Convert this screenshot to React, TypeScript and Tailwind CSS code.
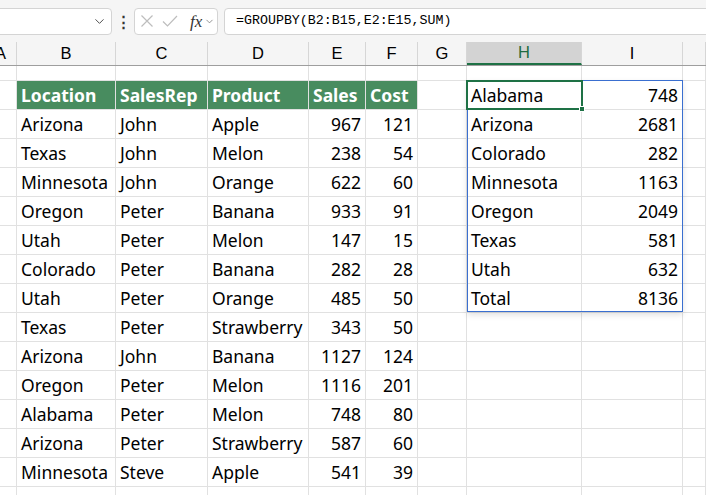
import { ChevronDown } from "lucide-react";

const cols = [
  { l: "A", w: 17 },
  { l: "B", w: 99 },
  { l: "C", w: 92 },
  { l: "D", w: 101 },
  { l: "E", w: 57 },
  { l: "F", w: 52 },
  { l: "G", w: 49 },
  { l: "H", w: 115 },
  { l: "I", w: 101 },
  { l: "J", w: 23 },
];

const sales: [string, string, string, number, number][] = [
  ["Arizona", "John", "Apple", 967, 121],
  ["Texas", "John", "Melon", 238, 54],
  ["Minnesota", "John", "Orange", 622, 60],
  ["Oregon", "Peter", "Banana", 933, 91],
  ["Utah", "Peter", "Melon", 147, 15],
  ["Colorado", "Peter", "Banana", 282, 28],
  ["Utah", "Peter", "Orange", 485, 50],
  ["Texas", "Peter", "Strawberry", 343, 50],
  ["Arizona", "John", "Banana", 1127, 124],
  ["Oregon", "Peter", "Melon", 1116, 201],
  ["Alabama", "Peter", "Melon", 748, 80],
  ["Arizona", "Peter", "Strawberry", 587, 60],
  ["Minnesota", "Steve", "Apple", 541, 39],
];

const groups: [string, number][] = [
  ["Alabama", 748],
  ["Arizona", 2681],
  ["Colorado", 282],
  ["Minnesota", 1163],
  ["Oregon", 2049],
  ["Texas", 581],
  ["Utah", 632],
  ["Total", 8136],
];

type Cell = { v?: string | number; head?: boolean };

function Row({ cells, h }: { cells: Cell[]; h: string }) {
  return (
    <div className={`flex ${h}`}>
      {cols.map((c, i) => {
        const cell = cells[i] || {};
        const num = typeof cell.v === "number";
        return (
          <div
            key={c.l}
            style={{ width: c.w }}
            className={`shrink-0 border-r border-b border-[#e1e1e1] flex items-center overflow-hidden whitespace-nowrap px-[4px] ${
              cell.head ? "bg-[#488c5f] text-white font-bold" : "text-black"
            } ${num ? "justify-end" : "justify-start"}`}
          >
            {cell.v}
          </div>
        );
      })}
    </div>
  );
}

export default function App() {
  const rows: Cell[][] = [];
  rows.push([
    {},
    { v: "Location", head: true },
    { v: "SalesRep", head: true },
    { v: "Product", head: true },
    { v: "Sales", head: true },
    { v: "Cost", head: true },
    {},
    { v: groups[0][0] },
    { v: groups[0][1] },
  ]);
  sales.forEach((s, i) => {
    const g = groups[i + 1];
    rows.push([
      {},
      { v: s[0] },
      { v: s[1] },
      { v: s[2] },
      { v: s[3] },
      { v: s[4] },
      {},
      g ? { v: g[0] } : {},
      g ? { v: g[1] } : {},
    ]);
  });

  return (
    <div className="w-[706px] h-[495px] overflow-hidden bg-white font-['Noto_Sans',sans-serif] text-[17.5px] relative">
      {/* formula bar */}
      <div className="h-[42px] bg-[#f5f5f5] flex items-center">
        <div className="h-[27px] w-[122px] shrink-0 -ml-[10px] bg-white border border-[#d4d4d4] rounded-[4px] flex items-center justify-end pr-[4px]">
          <ChevronDown size={15} strokeWidth={1.5} className="text-[#444]" />
        </div>
        <div className="w-[22px] shrink-0 flex justify-center text-[#333] font-bold text-[15px] leading-none">⋮</div>
        <div className="h-[27px] w-[84px] shrink-0 bg-white border border-[#d4d4d4] rounded-[4px] flex items-center pl-[5px]">
          <svg width="14" height="14" viewBox="0 0 14 14" className="text-[#bdbdbd]">
            <path d="M1.5 1.5 L12.5 12.5 M12.5 1.5 L1.5 12.5" stroke="currentColor" strokeWidth="1.2" fill="none" />
          </svg>
          <svg width="16" height="14" viewBox="0 0 16 14" className="text-[#bdbdbd] ml-[8px]">
            <path d="M1 7.5 L5.5 12 L15 2" stroke="currentColor" strokeWidth="1.2" fill="none" />
          </svg>
          <span className="font-['Liberation_Serif',serif] italic text-[17px] text-[#333] leading-none ml-[12px]">
            fx
          </span>
          <ChevronDown size={11} strokeWidth={1.5} className="text-[#666] ml-[2px]" />
        </div>
        <div className="h-[27px] flex-1 ml-[6px] -mr-[10px] bg-white border border-[#d4d4d4] rounded-[4px] flex items-center pl-[11px] font-['Liberation_Mono',monospace] text-[13.3px] text-black">
          =GROUPBY(B2:B15,E2:E15,SUM)
        </div>
      </div>

      {/* column headers */}
      <div className="flex h-[24px] bg-[#f5f5f5] border-b border-[#9e9e9e] font-['Liberation_Sans',sans-serif] text-[16.5px] text-black">
        {cols.map((c, i) => (
          <div
            key={c.l}
            style={{ width: c.w }}
            className={`shrink-0 border-r border-[#d6d6d6] flex items-center overflow-hidden ${
              i === 0 ? "justify-start" : "justify-center"
            } ${c.l === "H" ? "bg-[#d3d3d3] text-[#1e6b40] border-b-2 border-b-[#1e7145]" : ""}`}
          >
            {i === 0 ? <span className="-ml-[5px]">A</span> : c.l === "J" ? null : c.l}
          </div>
        ))}
      </div>

      {/* grid */}
      <Row cells={[]} h="h-[15px]" />
      {rows.map((r, i) => (
        <Row key={i} cells={r} h="h-[29px]" />
      ))}
      <Row cells={[]} h="h-[20px]" />

      {/* spill range outline */}
      <div className="absolute left-[467px] top-[80px] w-[216px] h-[232px] border border-[#3a6fd0] shadow-[0_3px_6px_rgba(0,0,0,0.12)] pointer-events-none" />
      {/* active cell */}
      <div className="absolute left-[466px] top-[80px] w-[117px] h-[30px] border-2 border-[#1e7145] pointer-events-none" />
      <div className="absolute left-[579px] top-[106px] w-[6px] h-[6px] bg-[#1e7145] border border-white pointer-events-none" />
    </div>
  );
}
